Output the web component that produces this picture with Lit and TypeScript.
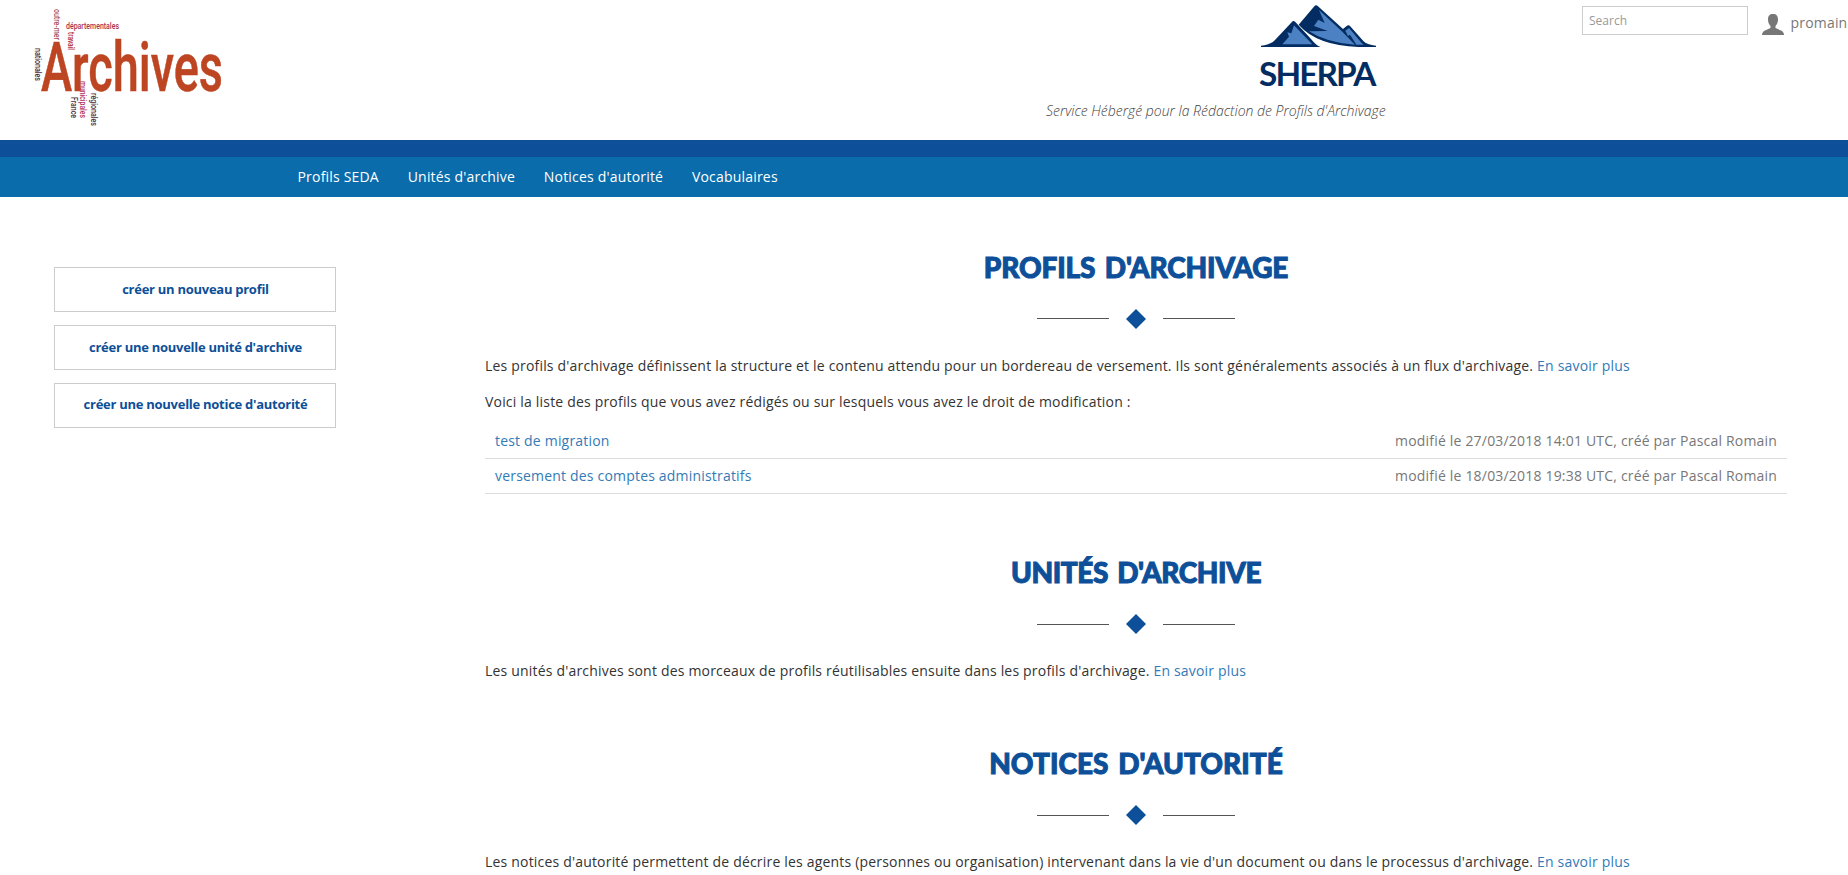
import { LitElement, html, css } from "lit";
import { customElement } from "lit/decorators.js";

interface Row { title: string; meta: string; }
interface Section { cls: string; title: string; text: string; list?: string; rows?: Row[]; }

const NAV = ["Profils SEDA", "Unités d'archive", "Notices d'autorité", "Vocabulaires"];
const ACTIONS = ["créer un nouveau profil", "créer une nouvelle unité d'archive", "créer une nouvelle notice d'autorité"];
const SECTIONS: Section[] = [
  {
    cls: "s1",
    title: "PROFILS D'ARCHIVAGE",
    text: "Les profils d'archivage définissent la structure et le contenu attendu pour un bordereau de versement. Ils sont généralements associés à un flux d'archivage.",
    list: "Voici la liste des profils que vous avez rédigés ou sur lesquels vous avez le droit de modification :",
    rows: [
      { title: "test de migration", meta: "modifié le 27/03/2018 14:01 UTC, créé par Pascal Romain" },
      { title: "versement des comptes administratifs", meta: "modifié le 18/03/2018 19:38 UTC, créé par Pascal Romain" },
    ],
  },
  { cls: "s2", title: "UNITÉS D'ARCHIVE", text: "Les unités d'archives sont des morceaux de profils réutilisables ensuite dans les profils d'archivage." },
  { cls: "s3", title: "NOTICES D'AUTORITÉ", text: "Les notices d'autorité permettent de décrire les agents (personnes ou organisation) intervenant dans la vie d'un document ou dans le processus d'archivage." },
];

@customElement("app-root")
export class AppRoot extends LitElement {
  static styles = css`
    :host { display: block; height: 875px; overflow: hidden; background: #fff; color: #333; font: 14px/20px "Open Sans", "Noto Sans", sans-serif; letter-spacing: 0.19px; }
    * { box-sizing: border-box; }
    a { color: #337ab7; text-decoration: none; }
    header { display: flex; height: 140px; }
    .archives { width: 240px; height: 140px; display: block; flex: none; overflow: visible; letter-spacing: 0; }
    .brand { width: 342px; margin-left: 806px; flex: none; letter-spacing: 0; }
    .sherpa { display: block; width: 130px; height: 95px; margin-left: 209px; }
    .tagline { margin: 6px 0 0; white-space: nowrap; font-style: italic; font-weight: 300; color: #444; line-height: 20px; }
    .search { width: 166px; height: 29px; margin: 6px 0 0 194px; padding: 0 6px; border: 1px solid #ccc; font: 12px "Open Sans", sans-serif; flex: none; border-radius: 0; }
    .search::placeholder { color: #999; opacity: 1; }
    .user { display: flex; margin: 13px 0 0 14px; color: #777; white-space: nowrap; height: 22px; flex: none; }
    .user svg { width: 22px; height: 22px; margin-right: 6.5px; flex: none; }
    nav { display: flex; gap: 28.8px; height: 57px; padding: 10px 0 0 297.5px; border-top: 17px solid #0d4f98; background: #0b6cab; line-height: 20px; }
    nav a { color: #fff; }
    .page { display: flex; }
    .side { width: 336px; padding: 70px 0 0 54px; display: flex; flex-direction: column; gap: 13px; flex: none; }
    .action { height: 45px; border: 1px solid #ccc; background: #fff; color: #0d4f98; font: 700 13px/20px "Open Sans", sans-serif; letter-spacing: -0.27px; padding: 0 0 1px 1px; }
    .action:last-child { padding-bottom: 3px; }
    main { width: 1302px; margin-left: 149px; flex: none; }
    section { display: flex; flex-direction: column; }
    .s1 { height: 305px; }
    .s2 { height: 191px; }
    h2 { margin: 52px 0 0; height: 36px; text-align: center; font: 900 28px/36px "Lato", sans-serif; word-spacing: 3px; color: #0d4f98; -webkit-text-stroke: 1px #0d4f98; }
    .s1 h2 { letter-spacing: -0.15px; }
    .s2 h2 { letter-spacing: -0.4px; }
    .s3 h2 { letter-spacing: 0.03px; }
    .rule { display: flex; justify-content: center; gap: 17px; height: 20px; margin-top: 24px; }
    .line { width: 72px; height: 1px; margin-top: 10px; background: #555; }
    .s1 .line { margin-top: 9px; }
    .diamond { width: 20px; height: 20px; fill: #0d4f98; }
    p { margin: 27px 0 0; }
    .list { margin-top: 16px; }
    ul { list-style: none; margin: 12px 0 0; padding: 0; }
    li { display: flex; justify-content: space-between; height: 35px; padding: 7px 10px 0; border-bottom: 1px solid #ddd; }
    .meta { color: #777; }
  `;

  render() {
    return html`
      <header>
        <svg class="archives" viewBox="0 0 240 140" font-family="Roboto, sans-serif">
          <text x="41" y="91" font-size="69" font-weight="500" textLength="182" lengthAdjust="spacingAndGlyphs" fill="#bd4522" stroke="#bd4522" stroke-width="0.6">Archives</text>
          <g font-size="9.5" font-weight="500">
            <text x="66" y="29" textLength="53" lengthAdjust="spacingAndGlyphs" fill="#a83250">départementales</text>
            <text transform="translate(54 9) rotate(90)" textLength="31" lengthAdjust="spacingAndGlyphs" fill="#a5505a">outre-mer</text>
            <text transform="translate(68 32) rotate(90)" textLength="18" lengthAdjust="spacingAndGlyphs" fill="#b0303a">travail</text>
            <text transform="translate(35 48) rotate(90)" textLength="33" lengthAdjust="spacingAndGlyphs" fill="#4a2c38">nationales</text>
            <text transform="translate(80 81) rotate(90)" textLength="37" lengthAdjust="spacingAndGlyphs" fill="#b03560">municipales</text>
            <text transform="translate(71 97) rotate(90)" textLength="21" lengthAdjust="spacingAndGlyphs" fill="#4a2c38">France</text>
            <text transform="translate(91 93) rotate(90)" textLength="33" lengthAdjust="spacingAndGlyphs" fill="#4a2c38">régionales</text>
          </g>
        </svg>
        <div class="brand">
          <svg class="sherpa" viewBox="0 0 390 285">
            <path d="M18 141 V137 Q48 134 60 120 L110 67 Q115 60 121 66 L170 119 Q182 135 197 141 Z" fill="#032d62" />
            <path d="M82 133 L102 110 L97 97 L109 100 L117 76 L172 133 Z" fill="#4c81c3" />
            <path d="M131 74 L178 19 Q183 12 189 19 L264 87 L275 78 Q281 73 287 80 L325 123 Q335 134 363 137 V141 H310 Q185 136 131 74 Z" fill="#032d62" />
            <path d="M192 30 L209 69 L190 59 L177 78 L218 93 L162 94 Q215 129 300 134 L262 95 Z" fill="#4c81c3" />
            <path d="M271 92 L282 84 L320 129 L326 134 L304 134 L285 104 L279 108 Z" fill="#4c81c3" />
            <text x="12" y="258" font-family="Lato, sans-serif" font-weight="700" font-size="100" textLength="352" lengthAdjust="spacing" fill="#032d62">SHERPA</text>
          </svg>
          <p class="tagline">Service Hébergé pour la Rédaction de Profils d'Archivage</p>
        </div>
        <input class="search" placeholder="Search" />
        <div class="user">
          <svg viewBox="0 0 22 22"><path d="M11 1 C7.500 1 6 3 6 6.500 C6 9.500 7 11.500 8.500 13 V15 L3 17.500 Q0 19 0 22 H22 Q22 19 19 17.500 L13.500 15 V13 C15 11.500 16 9.500 16 6.500 C16 3 14.500 1 11 1Z" fill="#777" /></svg>
          <span>promain</span>
        </div>
      </header>
      <nav>${NAV.map((n) => html`<a>${n}</a>`)}</nav>
      <div class="page">
        <div class="side">${ACTIONS.map((a) => html`<button class="action">${a}</button>`)}</div>
        <main>
          ${SECTIONS.map((s) => html`
            <section class=${s.cls}>
              <h2>${s.title}</h2>
              <div class="rule"><span class="line"></span><svg class="diamond" viewBox="0 0 20 20"><path d="M10 0 20 10 10 20 0 10Z" /></svg><span class="line"></span></div>
              <p>${s.text} <a>En savoir plus</a></p>
              ${s.rows ? html`<p class="list">${s.list}</p>
                <ul>${s.rows.map((r) => html`<li><a>${r.title}</a><span class="meta">${r.meta}</span></li>`)}</ul>` : ""}
            </section>`)}
        </main>
      </div>
    `;
  }
}
